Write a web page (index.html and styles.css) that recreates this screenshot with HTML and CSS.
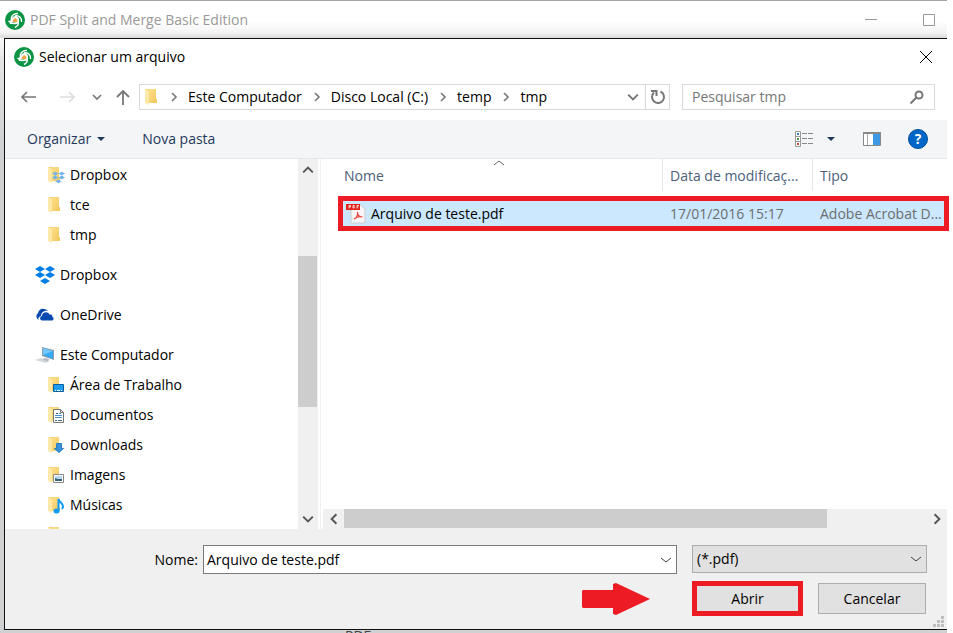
FILE: index.html
```html
<!DOCTYPE html>
<html lang="pt-BR">
<head>
    <meta charset="UTF-8">
    <meta name="viewport" content="width=device-width, initial-scale=1.0">
    <title>Selecionar um arquivo</title>
    <link rel="stylesheet" href="styles.css">
</head>
<body>
    <!-- shared icons -->
    <svg class="defs" aria-hidden="true">
        <defs>
            <linearGradient id="gold" x1="0" x2="1" y1="0" y2="1">
                <stop offset="0" stop-color="#ffe08a"/>
                <stop offset="1" stop-color="#f0c65c"/>
            </linearGradient>
        </defs>
        <symbol id="logo" viewBox="0 0 20 20">
            <circle cx="10" cy="10" r="10" fill="#0b9444"/>
            <path d="M7 12c-1-4 1-6 4-6 3 1 4 4 2 7z" fill="#fff"/>
            <path d="M7.500 12c0-2 1-3 3-4l2 2v2.500z" fill="#f0a244"/>
            <path d="M7 12C5 7 8 3 13 3.500M10 6c4-1 7 2 6.500 6M13 10c1 3 0 6-3 7.500M13 12.500c-3 1.500-7 1-9.500-1.500M7 9c-1 1-2 3-1.500 5" fill="none" stroke="#fff" stroke-width="1.400"/>
        </symbol>
        <symbol id="folder" viewBox="0 0 20 20">
            <path d="M3 2h8v14H4z" fill="#f3cd6b"/>
            <path d="M4 2h7v10h1v4H4z" fill="url(#gold)"/>
            <path d="M0 2l4 2v14l-4-2z" fill="#ffe9a9"/>
            <path d="M0 2h5l-1 2z" fill="#f7d374"/>
        </symbol>
        <symbol id="dropbox" viewBox="0 0 20 20">
            <path d="M5 1l5 3-5 3-5-3zM15 1l5 3-5 3-5-3zM5 7l5 3-5 3-5-3zM15 7l5 3-5 3-5-3zM10 13l5 3-5 3-5-3z"/>
        </symbol>
        <symbol id="down" viewBox="0 0 10 10">
            <path d="M1 3l4 4 4-4" fill="none" stroke="currentColor" stroke-width="1.600"/>
        </symbol>
        <symbol id="thin" viewBox="0 0 10 10">
            <path d="M0 3l5 4 5-4" fill="none" stroke="currentColor"/>
        </symbol>
        <symbol id="next" viewBox="0 0 10 10">
            <path d="M3 1l4 4-4 4" fill="none" stroke="currentColor" stroke-width="1.600"/>
        </symbol>
    </svg>

    <div class="app">
        <header class="app-bar">
            <svg class="icon"><use href="#logo"/></svg>
            <span class="app-title">PDF Split and Merge Basic Edition</span>
            <button class="plain" aria-label="Minimizar"><svg width="12" height="12"><path d="M0 5.500h12" stroke="#999"/></svg></button>
            <button class="plain" aria-label="Maximizar"><svg width="12" height="12"><path d="M.5.5h11v11H.5z" fill="none" stroke="#999"/></svg></button>
        </header>

        <main class="dialog">
            <div class="title-bar">
                <svg class="icon"><use href="#logo"/></svg>
                <h1>Selecionar um arquivo</h1>
                <button class="plain" aria-label="Fechar"><svg width="12" height="12"><path d="M0 0l12 12M12 0L0 12" stroke="#000"/></svg></button>
            </div>

            <nav class="nav">
                <button class="plain back" aria-label="Voltar"><svg width="15" height="14"><path d="M15 7H1M6 2L1 7l5 5" fill="none" stroke="#777" stroke-width="1.600"/></svg></button>
                <button class="plain forward" aria-label="Avançar"><svg width="15" height="14"><path d="M0 7h14M9 2l5 5-5 5" fill="none" stroke="#ddd" stroke-width="1.600"/></svg></button>
                <button class="plain recent" aria-label="Locais recentes"><svg width="10" height="10"><use href="#down"/></svg></button>
                <button class="plain up" aria-label="Acima"><svg width="14" height="16"><path d="M7 16V2M1 8l6-6 6 6" fill="none" stroke="#777" stroke-width="1.800"/></svg></button>
                <div class="address">
                    <svg class="icon"><use href="#folder"/></svg>
                    <svg class="sep"><use href="#next"/></svg><a href="#">Este Computador</a>
                    <svg class="sep"><use href="#next"/></svg><a href="#">Disco Local (C:)</a>
                    <svg class="sep"><use href="#next"/></svg><a href="#">temp</a>
                    <svg class="sep"><use href="#next"/></svg><a href="#">tmp</a>
                    <button class="plain history" aria-label="Locais anteriores"><svg width="12" height="12"><use href="#down"/></svg></button>
                    <button class="plain refresh" aria-label="Atualizar"><svg width="16" height="16" viewBox="0 0 16 16"><path d="M10.500 2.500A6 6 0 1 1 4 3.500" fill="none" stroke="#777" stroke-width="2"/><path d="M1 2h5.500v5" fill="none" stroke="#777" stroke-width="2"/></svg></button>
                </div>
                <div class="search">
                    <input type="text" placeholder="Pesquisar tmp" aria-label="Pesquisar tmp">
                    <svg width="14" height="14"><circle cx="9" cy="5" r="3.500" fill="none" stroke="#777" stroke-width="2"/><path d="M6.500 7.500l-6 6" stroke="#777" stroke-width="2"/></svg>
                </div>
            </nav>

            <div class="toolbar">
                <button class="plain">Organizar <svg width="8" height="4"><path d="M0 0h8L4 4z" fill="#1e395b"/></svg></button>
                <button class="plain">Nova pasta</button>
                <button class="plain view" aria-label="Alterar o modo de exibição">
                    <svg width="18" height="16">
                        <path d="M.5.500h5v15h-5zM.5 5.500h5M.5 10.500h5" fill="#fff" stroke="#999"/>
                        <path d="M7 2.500h5m1 0h5M7 7.500h5m1 0h5M7 12.500h5m1 0h5" stroke="#888"/>
                        <path d="M2 2h2v2H2z" fill="#2b7fc4"/><path d="M2 7h2v2H2z" fill="#5a8f3c"/><path d="M2 12h2v2H2z" fill="#d0402b"/>
                    </svg>
                    <svg width="8" height="4"><path d="M0 0h8L4 4z" fill="#1e395b"/></svg>
                </button>
                <button class="plain" aria-label="Painel de visualização">
                    <svg width="18" height="14"><path d="M.5.500h17v13H.5z" fill="#fff" stroke="#888"/><path d="M0 0h18v2H0z" fill="#888"/><path d="M4.500 2v11" stroke="#aaa"/><path d="M10 2h7v11h-7z" fill="#3f9ae5"/></svg>
                </button>
                <button class="help" aria-label="Ajuda">?</button>
            </div>

            <div class="content">
                <aside class="side">
                    <ul class="tree">
                        <li class="sub"><svg class="icon"><use href="#folder"/><use href="#dropbox" x="4" y="6" width="13" height="13" fill="#74b6ec"/></svg>Dropbox</li>
                        <li class="sub"><svg class="icon"><use href="#folder"/></svg>tce</li>
                        <li class="sub"><svg class="icon"><use href="#folder"/></svg>tmp</li>
                        <li class="root"><svg class="icon"><use href="#dropbox" fill="#007ee5"/></svg>Dropbox</li>
                        <li class="root"><svg class="icon"><path d="M4 15a4 4 0 0 1-1-7c1-3 3-5 6-4 2 0 3 1 4 2-4-1-7 2-7 5-3 1-3 3-2 4z" fill="#094ab2"/><path d="M7 15.500c-3-1-2-4 0-4.500 0-4 6-5 7.500-1.500 3-.5 3 2 3 2.500 2 1 1 3.500-.5 3.500z" fill="#094ab2"/></svg>OneDrive</li>
                        <li class="root"><svg class="icon"><path d="M7 2l12 3v10L7 11z" fill="#8a9aa8"/><path d="M8 3l10 3v8L8 10z" fill="#35aaf2"/><path d="M8 3l10 3-10 4z" fill="#74c8fa"/><path d="M0 15l6-2 9 3-4 2z" fill="#d4d8dc"/><path d="M9 13l5 1-1 2-5-1z" fill="#adb5bd"/></svg>Este Computador</li>
                        <li class="sub"><svg class="icon"><use href="#folder"/><path d="M5.500 9.500h10v7h-10z" fill="#1e9cf0" stroke="#075ea5"/><path d="M7 15.500h1m1 0h3m1 0h1" stroke="#fff"/></svg>Área de Trabalho</li>
                        <li class="sub"><svg class="icon"><use href="#folder"/><path d="M5.500 4.500h7l3 3v10h-10z" fill="#fff" stroke="#777"/><path d="M12.500 4.500v3h3" fill="none" stroke="#777"/><path d="M7 10.500h7M7 12.500h7M11 8.500h2" stroke="#4a91c8"/><path d="M7 15.500h2m1 0h4M8 8.500h2" stroke="#46657d"/></svg>Documentos</li>
                        <li class="sub"><svg class="icon"><use href="#folder"/><path d="M8.500 8.500h5v5h2l-4.500 4-4.500-4h2z" fill="#3b92dc" stroke="#2a7cc4"/></svg>Downloads</li>
                        <li class="sub"><svg class="icon"><use href="#folder"/><path d="M5.500 9.500h10v8h-10z" fill="#fff" stroke="#888"/><path d="M7 11h7v5H7z" fill="#b7d9ef"/><path d="M7 16v-3l3 1h4v2z" fill="#3c6472"/></svg>Imagens</li>
                        <li class="sub"><svg class="icon"><use href="#folder"/><ellipse cx="8.500" cy="16" rx="3" ry="2.500" fill="#0c9bf5"/><path d="M10.500 16V4c1 4 5 4 4.500 8l-1 2" fill="none" stroke="#0c9bf5" stroke-width="2"/></svg>Músicas</li>
                        <li class="sub"><svg class="icon"><use href="#folder"/></svg></li>
                    </ul>
                    <div class="scroll-y">
                        <button class="plain" aria-label="Rolar para cima"><svg class="flip" width="12" height="12"><use href="#down"/></svg></button>
                        <div class="track"><div class="thumb"></div></div>
                        <button class="plain" aria-label="Rolar para baixo"><svg width="12" height="12"><use href="#down"/></svg></button>
                    </div>
                </aside>

                <section class="files">
                    <table>
                        <colgroup><col><col class="col-date"><col class="col-type"></colgroup>
                        <thead>
                            <tr>
                                <th><span>Nome</span><svg class="sort" width="10" height="8" viewBox="0 1 10 8"><use href="#thin" width="10" height="10"/></svg></th>
                                <th><span>Data de modificaç...</span></th>
                                <th><span>Tipo</span></th>
                            </tr>
                        </thead>
                        <tbody>
                            <tr class="selected">
                                <td class="name">
                                    <div>
                                        <svg class="icon"><path d="M5 1h10l4 4v14H5z" fill="#f7f5f5" stroke="#ccc"/><path d="M0 0h14v6H0z" fill="#e2231a"/><path d="M3 4.500v-3h1.500v1.500H3M7 1.500h1.200v2.500H7zM11 4.500v-3h2M11 3h1.500" fill="none" stroke="#fff" stroke-width=".8"/><path d="M8 15c3-1 4-5 3.500-7 0 3 2 5 5 5-3-1-6 0-8.500 2z" fill="none" stroke="#e8473f" stroke-width="1.200"/></svg>
                                        Arquivo de teste.pdf
                                    </div>
                                </td>
                                <td>17/01/2016 15:17</td>
                                <td>Adobe Acrobat D...</td>
                            </tr>
                        </tbody>
                    </table>
                    <div class="scroll-x">
                        <button class="plain" aria-label="Rolar para a esquerda"><svg class="flip" width="12" height="12"><use href="#next"/></svg></button>
                        <div class="track"><div class="thumb"></div></div>
                        <button class="plain" aria-label="Rolar para a direita"><svg width="12" height="12"><use href="#next"/></svg></button>
                    </div>
                </section>
            </div>

            <form class="bottom">
                <div class="fields">
                    <label for="filename">Nome:</label>
                    <div class="combo">
                        <input type="text" id="filename" value="Arquivo de teste.pdf">
                        <button type="button" class="plain" aria-label="Nomes anteriores"><svg width="10" height="10"><use href="#thin"/></svg></button>
                    </div>
                    <div class="filter">
                        <select aria-label="Tipo de arquivo"><option>(*.pdf)</option></select>
                        <svg width="10" height="10"><use href="#thin"/></svg>
                    </div>
                </div>
                <div class="actions">
                    <svg class="arrow" width="70" height="34"><path d="M2 8h30V2l3-1 34 16-34 16-3-1v-6H2l-1-1V9z" fill="#ed1c24"/></svg>
                    <button type="button" class="btn open">Abrir</button>
                    <button type="button" class="btn">Cancelar</button>
                </div>
                <svg class="grip" width="12" height="12"><path d="M8 0h3v3H8zM4 4h3v3H4zM8 4h3v3H8zM0 8h3v3H0zM4 8h3v3H4zM8 8h3v3H8z" fill="#bfbfbf"/></svg>
            </form>
        </main>
        <footer class="behind">PDF.com</footer>
    </div>
</body>
</html>
```

FILE: styles.css
```css
* {
    box-sizing: border-box;
}
body {
    margin: 0;
    background: #fff;
    font: 14px/20px "Open Sans", "Noto Sans", sans-serif;
    color: #000;
}
button, input, select {
    font: inherit;
    color: inherit;
}
svg {
    display: block;
    flex: none;
}
.defs {
    position: absolute;
    width: 0;
    height: 0;
}
.icon {
    width: 20px;
    height: 20px;
}
.plain {
    display: flex;
    align-items: center;
    justify-content: center;
    padding: 0;
    border: 0;
    background: none;
}

/* window behind the dialog */
.app {
    display: flex;
    flex-direction: column;
    height: 100vh;
    margin-right: 6px;
    border-top: 1px solid #a3a3a3;
    background: linear-gradient(#fff 30px, #e4e4e4 60px, #d0d1d3 140px);
}
.app-bar {
    display: flex;
    align-items: center;
    height: 37px;
    padding: 0 12px 0 5px;
    background: linear-gradient(#fff 20px, #f3f3f3 32px, #d9d9d9);
    color: #999;
}
.app-title {
    flex: 1;
    padding-left: 5px;
}
.app-bar .plain {
    margin-left: 46px;
}
.behind {
    height: 3px;
    padding-left: 345px;
    overflow: hidden;
    line-height: 12px;
    color: #444;
}

/* dialog */
.dialog {
    display: flex;
    flex: 1;
    flex-direction: column;
    min-height: 0;
    margin-left: 4px;
    border: 1px solid #111;
    border-right: 0;
    background: #fff;
}
.title-bar {
    display: flex;
    align-items: center;
    height: 37px;
    padding: 0 15px 1px 9px;
}
.title-bar h1 {
    flex: 1;
    margin: 0;
    padding-left: 5px;
    font-size: 14px;
    font-weight: normal;
}

/* address row */
.nav {
    display: flex;
    align-items: center;
    height: 44px;
    padding: 0 12px 2px 16px;
    color: #777;
}
.forward {
    margin-left: 24px;
}
.recent {
    margin-left: 17px;
}
.up {
    margin: 0 9px 0 14px;
}
.address {
    display: flex;
    flex: 1;
    align-items: center;
    height: 26px;
    padding-left: 5px;
    border: 1px solid #d9d9d9;
}
.address .sep {
    width: 10px;
    height: 10px;
    margin: 0 9px 0 10px;
}
.address .icon + .sep {
    margin-left: 4px;
}
.address a {
    color: #000;
    text-decoration: none;
    white-space: nowrap;
}
.history {
    width: 24px;
    margin-left: auto;
}
.refresh {
    width: 24px;
    height: 24px;
    border-left: 1px solid #d9d9d9;
}
.search {
    display: flex;
    align-items: center;
    width: 253px;
    height: 26px;
    margin-left: 12px;
    padding: 0 10px 0 9px;
    border: 1px solid #d9d9d9;
}
.search input {
    flex: 1;
    min-width: 0;
    padding: 0;
    border: 0;
    outline: 0;
}
.search input::placeholder {
    color: #777;
    opacity: 1;
}

.toolbar {
    display: flex;
    align-items: center;
    height: 39px;
    padding: 0 19px 0 22px;
    border-bottom: 1px solid #e4e7ea;
    background: #f4f5f7;
    color: #1e395b;
}
.toolbar .plain {
    gap: 6px;
    margin-right: 37px;
}
.toolbar .view {
    gap: 14px;
    margin-right: 28px;
    margin-left: auto;
}
.toolbar .view + .plain {
    margin-right: 27px;
}
.help {
    width: 20px;
    height: 20px;
    padding: 0;
    border: 1px solid #00519c;
    border-radius: 50%;
    background: #0067c8;
    color: #fff;
    font-size: 14px;
    font-weight: bold;
    line-height: 18px;
}

.content {
    display: flex;
    flex: 1;
    min-height: 0;
}

/* folder tree */
.side {
    display: flex;
    width: 316px;
    border-right: 1px solid #f0f0f0;
}
.tree {
    flex: 1;
    margin: 0;
    padding: 1px 0 0;
    overflow: hidden;
    list-style: none;
}
.tree li {
    display: flex;
    align-items: center;
    height: 30px;
}
.tree .sub {
    gap: 2px;
    padding-left: 43px;
}
.tree .root {
    gap: 5px;
    margin: 10px 0;
    padding-left: 30px;
}
.tree .root + .root {
    margin-top: 0;
}
.tree .root:has(+ .sub) {
    margin-bottom: 0;
}

/* scroll bars */
.scroll-y, .scroll-x {
    display: flex;
    background: #f0f0f0;
    color: #555;
}
.scroll-y {
    flex-direction: column;
    width: 20px;
    margin-right: 2px;
}
.scroll-x {
    height: 20px;
    margin-left: 2px;
}
.track {
    flex: 1;
}
.scroll-y .plain {
    height: 21px;
}
.scroll-x .plain {
    width: 21px;
}
.scroll-y .track {
    padding-top: 76px;
}
.scroll-y .thumb {
    width: 19px;
    height: 151px;
    background: #cdcdcd;
}
.scroll-x .thumb {
    width: 83%;
    height: 19px;
    background: #cdcdcd;
}
.flip {
    transform: rotate(180deg);
}

/* file list */
.files {
    display: flex;
    flex: 1;
    flex-direction: column;
    justify-content: space-between;
    min-width: 0;
}
.files table {
    margin: 0 3px 0 22px;
    border-spacing: 0;
    table-layout: fixed;
}
.col-date {
    width: 150px;
}
.col-type {
    width: 132px;
}
.files th {
    position: relative;
    height: 42px;
    padding: 0;
    color: #4c607a;
    font-weight: normal;
    text-align: left;
    vertical-align: top;
}
.files th span {
    display: block;
    height: 32px;
    padding-left: 7px;
    border-left: 1px solid #e5e5e5;
    line-height: 33px;
    white-space: nowrap;
}
.files th:first-child span {
    padding-left: 1px;
    border: 0;
}
.sort {
    position: absolute;
    top: 0;
    left: 49%;
    color: #666;
    transform: translateX(-50%) rotate(180deg);
}
.files td {
    height: 25px;
    padding: 0 0 0 8px;
    overflow: hidden;
    background: #cce8ff;
    color: #6d6d6d;
    white-space: nowrap;
}
.files .name {
    padding-left: 3px;
    color: #000;
}
.name div {
    display: flex;
    align-items: center;
    gap: 5px;
}
.selected {
    outline: 5px solid #ed1c24;
}

/* file name, filter and buttons */
.bottom {
    position: relative;
    padding: 16px 20px 13px 0;
    background: #f0f0f0;
}
.fields, .actions {
    display: flex;
}
.fields label {
    width: 193px;
    margin-right: 5px;
    line-height: 29px;
    text-align: right;
}
.combo {
    display: flex;
    flex: 1;
    height: 29px;
    margin-right: 15px;
    border: 1px solid #7a7a7a;
    background: #fff;
}
.combo input {
    flex: 1;
    min-width: 0;
    padding: 0 3px;
    border: 0;
    outline: 0;
}
.combo .plain {
    width: 20px;
}
.filter {
    display: grid;
    width: 235px;
    height: 28px;
    align-items: center;
}
.filter select, .filter svg {
    grid-area: 1 / 1;
}
.filter select {
    height: 28px;
    padding: 0 4px;
    border: 1px solid #adadad;
    border-radius: 0;
    background: #e1e1e1;
    appearance: none;
}
.filter svg {
    justify-self: end;
    margin-right: 6px;
    pointer-events: none;
}
.combo svg, .filter svg {
    color: #444;
}
.actions {
    justify-content: flex-end;
    align-items: center;
    gap: 15px;
    margin-top: 7px;
    padding-right: 1px;
}
.arrow {
    margin-right: 26px;
}
.btn {
    width: 108px;
    height: 31px;
    padding: 0;
    border: 1px solid #adadad;
    background: #e1e1e1;
}
.btn.open {
    width: 111px;
    height: 35px;
    border: 5px solid #ed1c24;
}
.grip {
    position: absolute;
    right: 2px;
    bottom: 1px;
}
```
